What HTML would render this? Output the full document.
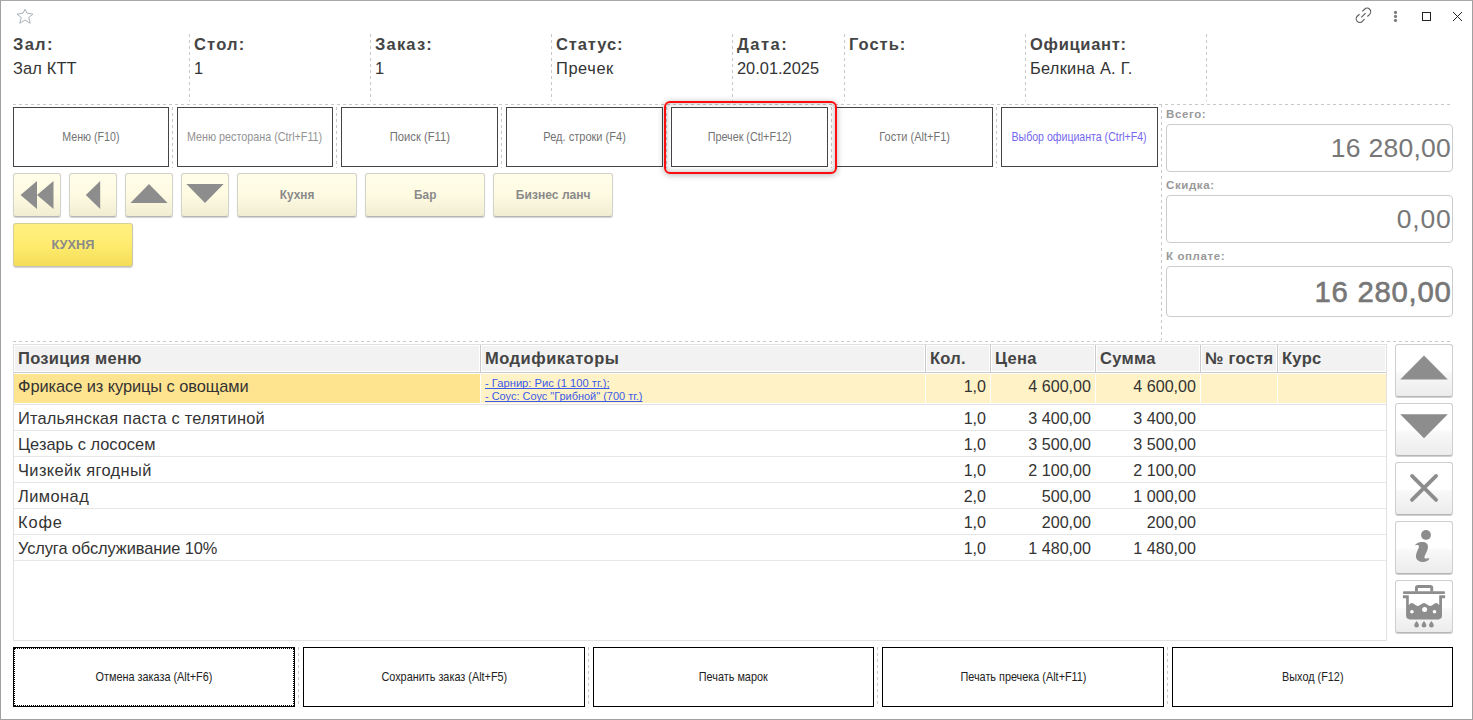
<!DOCTYPE html>
<html lang="ru"><head><meta charset="utf-8"><title>Заказ</title>
<style>
*{box-sizing:border-box;margin:0;padding:0}
html,body{width:1473px;height:720px;overflow:hidden;background:#fff}
body{font-family:"Liberation Sans",sans-serif;color:#333;position:relative}
#win{position:absolute;left:0;top:0;width:1473px;height:720px;border:1px solid #a0a0a0;border-top-color:#a8a8a8}
.abs{position:absolute}
.hl{position:absolute;font-size:16.4px;line-height:18px;white-space:nowrap;color:#333}
.hl b{font-weight:bold;color:#444;font-size:16.5px;letter-spacing:.3px}
.vd{position:absolute;width:1px;background:repeating-linear-gradient(180deg,#c8c8c8 0,#c8c8c8 3px,transparent 3px,transparent 6px)}
.hd{position:absolute;height:1px;background:repeating-linear-gradient(90deg,#c8c8c8 0,#c8c8c8 3px,transparent 3px,transparent 6px)}
.fb{position:absolute;border:1px solid #444;background:#fff;display:flex;align-items:center;justify-content:center;font-size:13px;color:#737373;white-space:nowrap}
.fb span{display:inline-block;transform:scaleX(.81);transform-origin:50% 50%;position:relative;top:-1px}
.yb{position:absolute;border-radius:3px;border:1px solid #d3d2cb;border-bottom-color:#b6b6b4;background:linear-gradient(#fffde9 0%,#fffbe2 50%,#f1edd3 100%);box-shadow:0 1px 1px #d2d2d2;display:flex;align-items:center;justify-content:center;font-size:13px;font-weight:bold;color:#8a8a8a;white-space:nowrap}
.gb{position:absolute;border-radius:3px;border:1px solid #cfcfcf;border-bottom-color:#b5b5b5;background:linear-gradient(#fff 0%,#fff 50%,#f8f8f8 56%,#ececec 100%);box-shadow:0 1px 0 #d0d0d0;display:flex;align-items:center;justify-content:center}
.tl{position:absolute;font-size:11.5px;letter-spacing:.6px;line-height:14px;font-weight:bold;color:#999;white-space:nowrap}
.tb{position:absolute;width:287px;border:1px solid #ccc;border-radius:4px;background:#fff;color:#777;text-align:right;padding-right:2px;display:flex;align-items:center;justify-content:flex-end;white-space:nowrap}
.th{position:absolute;top:348px;font-size:16.5px;letter-spacing:.3px;line-height:20px;font-weight:bold;color:#444;padding-left:3px;white-space:nowrap;overflow:hidden}
.td{position:absolute;font-size:16.4px;line-height:20px;color:#333;white-space:nowrap}
.tn{position:absolute;font-size:16.1px;line-height:20px;color:#333;white-space:nowrap;text-align:right}
.md{position:absolute;font-size:11.3px;line-height:13px;color:#3b5ae8;white-space:nowrap}
.md span{display:inline-block;transform:scaleX(.99);transform-origin:0 50%;text-decoration:underline;text-decoration-skip-ink:none;text-underline-offset:.6px;text-decoration-thickness:1px}
.bb{position:absolute;top:647px;height:60px;border:1px solid #000;background:#fff;display:flex;align-items:center;justify-content:center;font-size:13px;color:#222;white-space:nowrap}
.bb span{display:inline-block;transform:scaleX(.835);transform-origin:50% 50%;position:relative;top:-1px}
</style></head><body>
<div id="win"></div>
<!-- header -->
<div id="hdr">
<svg class="abs" style="left:15px;top:8px" width="20" height="18" viewBox="0 0 20 18"><path d="M10 1.2 L11.9 5.1 L18 6.2 L13.7 9.5 L15.2 15.3 L10 12 L4.8 15.3 L6.3 9.5 L2 6.2 L8.1 5.1 Z" fill="none" stroke="#aab2ba" stroke-width="1" stroke-linejoin="miter"/></svg>
<svg class="abs" style="left:1354px;top:6px" width="19" height="19" viewBox="0 0 19 19"><g fill="none" stroke="#5c5c5c" stroke-width="1.15" stroke-linecap="butt"><path d="M8.3 5.4 L10.55 3.25 A3.6 3.6 0 0 1 15.65 8.35 L13.4 10.5"/><path d="M5.5 8.3 L3.25 10.25 A3.6 3.6 0 0 0 8.35 15.35 L10.5 13.2"/><path d="M7.3 11.4 L11.6 7.2"/></g></svg>
<svg class="abs" style="left:1392px;top:9px" width="7" height="15" viewBox="0 0 7 15"><g fill="#7d7d7d"><circle cx="3.5" cy="3.4" r="1.6"/><circle cx="3.5" cy="7.4" r="1.6"/><circle cx="3.5" cy="11.4" r="1.6"/></g></svg>
<div class="abs" style="left:1422px;top:12px;width:9px;height:9px;border:1px solid #222"></div>
<svg class="abs" style="left:1452px;top:11px" width="11" height="11" viewBox="0 0 11 11"><path d="M1 1 L10 10 M10 1 L1 10" stroke="#222" stroke-width="1" fill="none"/></svg>
<div class="hl" style="left:13px;top:35px"><b style="letter-spacing:1.3px">Зал:</b></div><div class="hl" style="left:13px;top:59px;letter-spacing:.15px">Зал КТТ</div>
<div class="hl" style="left:194px;top:35px"><b style="letter-spacing:1.2px">Стол:</b></div><div class="hl" style="left:194px;top:59px">1</div>
<div class="hl" style="left:375px;top:35px"><b style="letter-spacing:1.2px">Заказ:</b></div><div class="hl" style="left:375px;top:59px">1</div>
<div class="hl" style="left:556px;top:35px"><b style="letter-spacing:.9px">Статус:</b></div><div class="hl" style="left:556px;top:59px;letter-spacing:.6px">Пречек</div>
<div class="hl" style="left:737px;top:35px"><b style="letter-spacing:1.5px">Дата:</b></div><div class="hl" style="left:737px;top:59px">20.01.2025</div>
<div class="hl" style="left:849px;top:35px"><b style="letter-spacing:1px">Гость:</b></div>
<div class="hl" style="left:1030px;top:35px"><b style="letter-spacing:.7px">Официант:</b></div><div class="hl" style="left:1030px;top:59px;letter-spacing:.25px">Белкина А. Г.</div>
<div class="vd" style="left:189px;top:34px;height:67px"></div>
<div class="vd" style="left:370px;top:34px;height:67px"></div>
<div class="vd" style="left:551px;top:34px;height:67px"></div>
<div class="vd" style="left:732px;top:34px;height:67px"></div>
<div class="vd" style="left:844px;top:34px;height:67px"></div>
<div class="vd" style="left:1025px;top:34px;height:67px"></div>
<div class="vd" style="left:1206px;top:34px;height:67px"></div>
<div class="hd" style="left:13px;top:104px;width:1438px"></div>
</div>
<!-- buttons -->
<div id="btns">
<div class="fb" style="left:13px;top:107px;width:156px;height:60px"><span style="transform:scaleX(.82)">Меню (F10)</span></div>
<div class="fb" style="left:177px;top:107px;width:156px;height:60px;color:#939393"><span style="transform:scaleX(.829)">Меню ресторана (Ctrl+F11)</span></div>
<div class="fb" style="left:341px;top:107px;width:157px;height:60px"><span style="transform:scaleX(.864)">Поиск (F11)</span></div>
<div class="fb" style="left:506px;top:107px;width:157px;height:60px"><span style="transform:scaleX(.849)">Ред. строки (F4)</span></div>
<div class="fb" style="left:671px;top:107px;width:157px;height:60px"><span style="transform:scaleX(.828)">Пречек (Ctl+F12)</span></div>
<div class="fb" style="left:836px;top:107px;width:157px;height:60px"><span style="transform:scaleX(.847)">Гости (Alt+F1)</span></div>
<div class="fb" style="left:1001px;top:107px;width:157px;height:60px;color:#7467ee"><span style="transform:scaleX(.813)">Выбор официанта (Ctrl+F4)</span></div>
<div class="vd" style="left:666px;top:107px;height:61px"></div>
<div class="vd" style="left:831px;top:107px;height:61px"></div>
<div class="abs" style="left:664px;top:101px;width:173px;height:72.5px;border:2px solid #fb0d0d;border-radius:6px;background:transparent;box-shadow:0 1px 6px rgba(0,0,0,.3),inset 0 0 5px 1px rgba(0,0,0,.22)"></div>
<div class="vd" style="left:172px;top:107px;height:61px"></div>
<div class="vd" style="left:336px;top:107px;height:61px"></div>
<div class="vd" style="left:501px;top:107px;height:61px"></div>
<div class="vd" style="left:996px;top:107px;height:61px"></div>
<div class="vd" style="left:1161px;top:104px;height:236px"></div>
<div class="yb" style="left:13px;top:173px;width:48px;height:44px"><svg width="34" height="30" viewBox="0 0 34 30" style="position:relative;left:.3px"><path d="M17 1 L17 29 L0.5 15 Z M33.5 1 L33.5 29 L17 15 Z" fill="#8d8d8d"/></svg></div>
<div class="yb" style="left:69px;top:173px;width:48px;height:44px"><svg width="16" height="30" viewBox="0 0 16 30" style="position:relative;left:.3px"><path d="M15.2 1 L15.2 29 L0.8 15 Z" fill="#8d8d8d"/></svg></div>
<div class="yb" style="left:125px;top:173px;width:48px;height:44px"><svg width="38" height="20" viewBox="0 0 38 20" style="position:relative;top:-1.5px"><path d="M19 0 L37.6 19 L0.4 19 Z" fill="#8d8d8d"/></svg></div>
<div class="yb" style="left:181px;top:173px;width:48px;height:44px"><svg width="38" height="20" viewBox="0 0 38 20" style="position:relative;top:-1.5px"><path d="M0.4 0 L37.6 0 L19 19 Z" fill="#8d8d8d"/></svg></div>
<div class="yb" style="left:237px;top:173px;width:120px;height:44px"><span style="display:inline-block;transform:scaleX(.91);position:relative;top:-1px">Кухня</span></div>
<div class="yb" style="left:365px;top:173px;width:120px;height:44px"><span style="display:inline-block;transform:scaleX(.91);position:relative;top:-1px">Бар</span></div>
<div class="yb" style="left:493px;top:173px;width:120px;height:44px"><span style="display:inline-block;transform:scaleX(.93);position:relative;top:-1px">Бизнес ланч</span></div>
<div class="yb" style="left:13px;top:223px;width:120px;height:44px;background:linear-gradient(#fff082 0%,#ffec6e 50%,#f3dc58 100%);border-color:#d6cf9a;border-bottom-color:#c4c2b4;border-right-color:#c9c6b0"><span style="display:inline-block;transform:scaleX(.98);position:relative;top:-1px">КУХНЯ</span></div>
</div>
<!-- totals -->
<div id="tot">
<div class="tl" style="left:1166px;top:107px">Всего:</div>
<div class="tb" style="left:1166px;top:124px;height:48px;font-size:26.5px;letter-spacing:.25px;padding-right:1px">16 280,00</div>
<div class="tl" style="left:1166px;top:178px">Скидка:</div>
<div class="tb" style="left:1166px;top:195px;height:48px;font-size:26.5px;letter-spacing:.8px;padding-right:.5px">0,00</div>
<div class="tl" style="left:1166px;top:249px">К оплате:</div>
<div class="tb" style="left:1166px;top:266px;height:51px;font-size:29.3px;letter-spacing:.75px;-webkit-text-stroke:.6px #777;padding-top:1px;padding-right:.5px">16 280,00</div>
<div class="hd" style="left:13px;top:341px;width:1438px"></div>
</div>
<!-- table -->
<div id="tbl">
<div class="abs" style="left:13px;top:344px;width:1374px;height:297px;border:1px solid #e0e0e0;background:#fff"></div>
<div class="abs" style="left:15px;top:346px;width:464px;height:25px;background:#f2f2f2"></div>
<div class="abs" style="left:482px;top:346px;width:442px;height:25px;background:#f2f2f2"></div>
<div class="abs" style="left:927px;top:346px;width:62px;height:25px;background:#f2f2f2"></div>
<div class="abs" style="left:992px;top:346px;width:102px;height:25px;background:#f2f2f2"></div>
<div class="abs" style="left:1097px;top:346px;width:102px;height:25px;background:#f2f2f2"></div>
<div class="abs" style="left:1202px;top:346px;width:74px;height:25px;background:#f2f2f2"></div>
<div class="abs" style="left:1279px;top:346px;width:106px;height:25px;background:#f2f2f2"></div>
<div class="abs" style="left:480px;top:345px;width:1px;height:28px;background:#cbcbcb"></div>
<div class="abs" style="left:925px;top:345px;width:1px;height:28px;background:#cbcbcb"></div>
<div class="abs" style="left:990px;top:345px;width:1px;height:28px;background:#cbcbcb"></div>
<div class="abs" style="left:1095px;top:345px;width:1px;height:28px;background:#cbcbcb"></div>
<div class="abs" style="left:1200px;top:345px;width:1px;height:28px;background:#cbcbcb"></div>
<div class="abs" style="left:1277px;top:345px;width:1px;height:28px;background:#cbcbcb"></div>
<div class="abs" style="left:14px;top:372px;width:1372px;height:1px;background:#cbcbcb"></div>
<div class="th" style="left:14px;width:466px;padding-left:4px">Позиция меню</div>
<div class="th" style="left:482px;width:443px;letter-spacing:.5px">Модификаторы</div>
<div class="th" style="left:927px;width:63px">Кол.</div>
<div class="th" style="left:992px;width:103px">Цена</div>
<div class="th" style="left:1097px;width:103px">Сумма</div>
<div class="th" style="left:1202px;width:75px">№ гостя</div>
<div class="th" style="left:1279px;width:107px">Курс</div>
<div class="abs" style="left:14px;top:374px;width:1372px;height:29px;background:#fff2c6"></div>
<div class="abs" style="left:14px;top:374px;width:466px;height:29px;background:#ffe48f"></div>
<div class="abs" style="left:480px;top:374px;width:1px;height:29px;background:#fff"></div>
<div class="abs" style="left:925px;top:374px;width:1px;height:29px;background:#fff"></div>
<div class="abs" style="left:990px;top:374px;width:1px;height:29px;background:#fff"></div>
<div class="abs" style="left:1095px;top:374px;width:1px;height:29px;background:#fff"></div>
<div class="abs" style="left:1200px;top:374px;width:1px;height:29px;background:#fff"></div>
<div class="abs" style="left:1277px;top:374px;width:1px;height:29px;background:#fff"></div>
<div class="td" style="left:18px;top:376px;letter-spacing:-.07px">Фрикасе из курицы с овощами</div>
<div class="md" style="left:485px;top:377px"><span>- Гарнир: Рис (1 100 тг.);</span></div>
<div class="md" style="left:485px;top:390px"><span style="transform:scaleX(.97)">- Соус: Соус "Грибной" (700 тг.)</span></div>
<div class="tn" style="left:926px;width:60px;top:376px">1,0</div>
<div class="tn" style="left:991px;width:100px;top:376px">4 600,00</div>
<div class="tn" style="left:1096px;width:100px;top:376px">4 600,00</div>
<div class="abs" style="left:14px;top:404px;width:1372px;height:1px;background:#e3e3e3"></div>
<div class="td" style="left:18px;top:408px;letter-spacing:.21px">Итальянская паста с телятиной</div><div class="tn" style="left:926px;width:60px;top:408px">1,0</div><div class="tn" style="left:991px;width:100px;top:408px">3 400,00</div><div class="tn" style="left:1096px;width:100px;top:408px">3 400,00</div>
<div class="abs" style="left:14px;top:430px;width:1372px;height:1px;background:#e6e6e6"></div>
<div class="td" style="left:18px;top:434px">Цезарь с лососем</div><div class="tn" style="left:926px;width:60px;top:434px">1,0</div><div class="tn" style="left:991px;width:100px;top:434px">3 500,00</div><div class="tn" style="left:1096px;width:100px;top:434px">3 500,00</div>
<div class="abs" style="left:14px;top:456px;width:1372px;height:1px;background:#e6e6e6"></div>
<div class="td" style="left:18px;top:460px;letter-spacing:.4px">Чизкейк ягодный</div><div class="tn" style="left:926px;width:60px;top:460px">1,0</div><div class="tn" style="left:991px;width:100px;top:460px">2 100,00</div><div class="tn" style="left:1096px;width:100px;top:460px">2 100,00</div>
<div class="abs" style="left:14px;top:482px;width:1372px;height:1px;background:#e6e6e6"></div>
<div class="td" style="left:18px;top:486px;letter-spacing:.45px">Лимонад</div><div class="tn" style="left:926px;width:60px;top:486px">2,0</div><div class="tn" style="left:991px;width:100px;top:486px">500,00</div><div class="tn" style="left:1096px;width:100px;top:486px">1 000,00</div>
<div class="abs" style="left:14px;top:508px;width:1372px;height:1px;background:#e6e6e6"></div>
<div class="td" style="left:18px;top:512px;letter-spacing:.9px">Кофе</div><div class="tn" style="left:926px;width:60px;top:512px">1,0</div><div class="tn" style="left:991px;width:100px;top:512px">200,00</div><div class="tn" style="left:1096px;width:100px;top:512px">200,00</div>
<div class="abs" style="left:14px;top:534px;width:1372px;height:1px;background:#e6e6e6"></div>
<div class="td" style="left:18px;top:538px;letter-spacing:-.1px">Услуга обслуживание 10%</div><div class="tn" style="left:926px;width:60px;top:538px">1,0</div><div class="tn" style="left:991px;width:100px;top:538px">1 480,00</div><div class="tn" style="left:1096px;width:100px;top:538px">1 480,00</div>
<div class="abs" style="left:14px;top:560px;width:1372px;height:1px;background:#e6e6e6"></div>
</div>
<!-- side -->
<div id="side">
<div class="gb" style="left:1395px;top:344px;width:58px;height:53px"></div>
<div class="gb" style="left:1395px;top:403px;width:58px;height:53px"></div>
<div class="gb" style="left:1395px;top:462px;width:58px;height:53px"></div>
<div class="gb" style="left:1395px;top:521px;width:58px;height:53px"></div>
<div class="gb" style="left:1395px;top:580px;width:58px;height:53px"></div>
<svg class="abs" style="left:1395px;top:344px" width="58" height="290" viewBox="1395 344 58 290">
<path d="M1424 355.5 L1447.8 379.5 L1400.2 379.5 Z" fill="#8d8d8d"/>
<path d="M1400.2 414.3 L1447.8 414.3 L1424 438.2 Z" fill="#8d8d8d"/>
<path d="M1412 475.9 L1436.1 499.9 M1436.1 475.9 L1412 499.9" stroke="#8d8d8d" stroke-width="3.8" stroke-linecap="round" fill="none"/>
<circle cx="1426" cy="534.9" r="4.95" fill="#8d8d8d"/>
<path d="M1414.97 545.40 C1414.94 545.13 1415.99 543.90 1416.77 543.38 C1417.55 542.87 1418.58 542.52 1419.66 542.30 C1420.74 542.08 1422.19 541.96 1423.27 542.08 C1424.35 542.20 1425.44 542.56 1426.16 543.02 C1426.88 543.48 1427.30 544.10 1427.60 544.83 C1427.90 545.55 1428.02 546.39 1427.96 547.35 C1427.90 548.32 1427.60 549.58 1427.24 550.60 C1426.88 551.63 1426.24 552.53 1425.80 553.49 C1425.35 554.45 1424.80 555.66 1424.57 556.38 C1424.34 557.10 1424.22 557.45 1424.43 557.82 C1424.63 558.20 1425.27 558.55 1425.80 558.62 C1426.33 558.69 1427.04 558.32 1427.60 558.26 C1428.17 558.20 1429.01 558.03 1429.19 558.26 C1429.37 558.48 1429.07 559.16 1428.69 559.63 C1428.30 560.10 1427.66 560.68 1426.88 561.07 C1426.10 561.47 1424.96 561.89 1423.99 562.01 C1423.03 562.13 1422.01 562.01 1421.10 561.79 C1420.20 561.58 1419.32 561.19 1418.58 560.71 C1417.83 560.23 1417.07 559.63 1416.63 558.91 C1416.18 558.18 1415.94 557.28 1415.91 556.38 C1415.87 555.48 1416.15 554.45 1416.41 553.49 C1416.68 552.53 1417.13 551.51 1417.49 550.60 C1417.86 549.70 1418.34 548.80 1418.58 548.08 C1418.82 547.35 1419.00 546.74 1418.94 546.27 C1418.88 545.80 1418.55 545.46 1418.22 545.26 C1417.88 545.06 1417.46 545.02 1416.92 545.04 C1416.38 545.07 1414.99 545.68 1414.97 545.40 Z" fill="#8d8d8d"/>
<g fill="#8d8d8d">
<path d="M1415 591.6 V587.8 a2.8 2.8 0 0 1 2.8 -2.8 h12.6 a2.8 2.8 0 0 1 2.8 2.8 V591.6 h-2.9 V588.4 a0.5 0.5 0 0 0 -0.5 -0.5 h-11.4 a0.5 0.5 0 0 0 -0.5 0.5 V591.6 Z"/>
<rect x="1402.9" y="591.2" width="42.2" height="2.8" rx="1.3"/>
<path d="M1402.9 595.3 H1408.8 V605.2 C1409.8 604 1411 603.1 1411.9 603.1 C1413.8 603.1 1415.6 606 1417.7 606 C1419.8 606 1421.8 603.1 1424 603.1 C1426.2 603.1 1428.2 606 1430.3 606 C1432.4 606 1434.2 603.1 1436.1 603.1 C1437 603.1 1438.2 604 1439.2 605.2 V595.3 H1445.1 V598.3 H1442 V615.6 a3.8 3.8 0 0 1 -3.8 3.8 H1409.9 a3.8 3.8 0 0 1 -3.8 -3.8 V598.3 H1402.9 Z"/>
<path d="M1416.6 621 C1418 623 1419 624.2 1419 625.2 a2.4 2.4 0 0 1 -4.8 0 C1414.2 624.2 1415.2 623 1416.6 621 Z"/>
<path d="M1424 621 C1425.4 623 1426.4 624.2 1426.4 625.2 a2.4 2.4 0 0 1 -4.8 0 C1421.6 624.2 1422.6 623 1424 621 Z"/>
<path d="M1431.4 621 C1432.8 623 1433.8 624.2 1433.8 625.2 a2.4 2.4 0 0 1 -4.8 0 C1429 624.2 1430 623 1431.4 621 Z"/>
</g>
<g fill="#fff"><circle cx="1411.9" cy="611.8" r="1.8"/><circle cx="1424.6" cy="609.6" r="2.5"/><circle cx="1434.5" cy="611.8" r="1.8"/></g>
</svg>
</div>
<!-- bottom -->
<div id="bot">
<div class="bb" style="left:13px;width:282px;outline:1px dotted #000;outline-offset:-2px"><span>Отмена заказа (Alt+F6)</span></div>
<div class="bb" style="left:303px;width:282px"><span>Сохранить заказ (Alt+F5)</span></div>
<div class="bb" style="left:593px;width:281px"><span>Печать марок</span></div>
<div class="bb" style="left:882px;width:282px"><span>Печать пречека (Alt+F11)</span></div>
<div class="bb" style="left:1172px;width:281px"><span>Выход (F12)</span></div>
<div class="vd" style="left:298px;top:647px;height:60px"></div>
<div class="vd" style="left:588px;top:647px;height:60px"></div>
<div class="vd" style="left:877px;top:647px;height:60px"></div>
<div class="vd" style="left:1167px;top:647px;height:60px"></div>
</div>
</body></html>
